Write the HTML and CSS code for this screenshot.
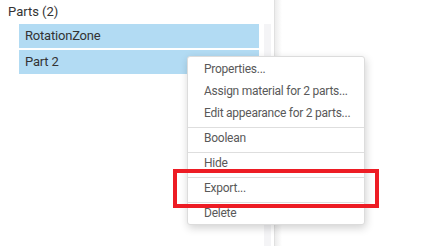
FILE: index.html
```html
<!DOCTYPE html>
<html lang="en">
<head>
    <meta charset="UTF-8">
    <title>Parts</title>
    <link rel="stylesheet" href="styles.css">
</head>
<body>
    <div class="page">
        <div class="sidebar">
            <div class="tree">
                <div class="tree-title">Parts (2)</div>
                <div class="part-row">RotationZone</div>
                <div class="part-row">Part 2</div>
            </div>
            <div class="scroll-track"></div>
        </div>
        <div class="viewport"></div>
    </div>

    <ul class="context-menu">
        <li class="menu-item">Properties...</li>
        <li class="menu-item">Assign material for 2 parts...</li>
        <li class="menu-item">Edit appearance for 2 parts...</li>
        <li class="menu-item split first">Boolean</li>
        <li class="menu-item split">Hide</li>
        <li class="menu-item split">Export...</li>
        <li class="menu-item split last">Delete</li>
    </ul>

    <div class="highlight-box"></div>
</body>
</html>
```

FILE: styles.css
```css
body {
    margin: 0;
    font-family: Roboto, "Noto Sans", sans-serif;
    font-size: 13px;
    color: #333;
    background: #fff;
}
.page {
    display: flex;
    height: 246px;
}
.sidebar {
    width: 274px;
    display: flex;
    border-right: 1px solid #e0e0e0;
}
.tree {
    flex: 1;
    padding-left: 8px;
}
.tree-title {
    line-height: 20px;
    padding-top: 2px;
    margin-bottom: 2px;
}
.part-row {
    margin: 0 5px 2px 11px;
    padding-left: 6px;
    height: 24px;
    line-height: 24px;
    letter-spacing: -0.2px;
    background: #b2dbf3;
}
.scroll-track {
    width: 7px;
    margin: 24px 3px 0 0;
    background: #f4f4f6;
}
.viewport {
    flex: 1;
    background: linear-gradient(to right, #ececec, #fff 7px);
}
.context-menu {
    position: absolute;
    left: 187px;
    top: 56px;
    width: 178px;
    box-sizing: border-box;
    margin: 0;
    padding: 2px 0 0;
    list-style: none;
    background: #fff;
    border: 1px solid #dcdcdc;
    border-radius: 3px;
    box-shadow: 1px 3px 8px rgba(0, 0, 0, 0.18);
    color: #595959;
    font-size: 12px;
    letter-spacing: -0.25px;
}
.menu-item {
    padding: 0 0 2px 16px;
    line-height: 20px;
    white-space: nowrap;
}
.menu-item.split {
    border-top: 1px solid #dedede;
    padding-bottom: 4px;
}
.menu-item.first {
    margin-top: 2px;
}
.menu-item.last {
    padding-bottom: 1px;
}
.highlight-box {
    position: absolute;
    left: 173px;
    top: 169px;
    width: 206px;
    height: 39px;
    box-sizing: border-box;
    border: 4px solid #ed1c24;
}
```
